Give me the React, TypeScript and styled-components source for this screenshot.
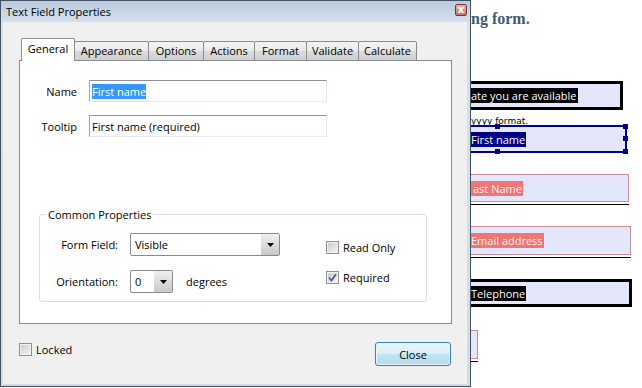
import styled, { createGlobalStyle } from "styled-components";

const Global = createGlobalStyle`
  html, body { margin: 0; padding: 0; background: #fff; }
  body { width: 642px; height: 388px; overflow: hidden; }
`;

const Screen = styled.div`
  display: flex;
  width: 642px;
  height: 388px;
  overflow: hidden;
  font-family: "Open Sans", "Liberation Sans", sans-serif;
  font-size: 11px;
  color: #000;
`;

/* ---------- dialog window ---------- */

const Dialog = styled.div`
  flex: none;
  width: 471px;
  height: 387px;
  box-sizing: border-box;
  border: 1px solid #44515e;
  background: linear-gradient(#b9cbdf, #d6e1ed 22px, #cfdcea);
  display: flex;
  flex-direction: column;
  padding: 0 3px 2px 2px;
  position: relative;
  z-index: 2;
`;

const TitleBar = styled.div`
  height: 21px;
  display: flex;
  align-items: center;
  justify-content: space-between;
  padding: 0 0 0 3px;
`;

const Title = styled.span`
  font-size: 11px;
  color: #000;
  margin-top: -1px;
`;

const CloseX = styled.div`
  width: 12px;
  height: 12px;
  box-sizing: border-box;
  border: 1px solid #6e3a3a;
  border-radius: 2px;
  background: linear-gradient(#e8b4b4, #c77373);
  color: #fff;
  font: bold 10px/10px "DejaVu Sans", sans-serif;
  text-align: center;
  margin-top: -3px;
`;

const Body = styled.div`
  flex: 1;
  background: #f0f0f0;
  display: flex;
  flex-direction: column;
  padding: 17px 0 0 0;
`;

const TabRow = styled.div`
  display: flex;
  align-items: flex-end;
  height: 22px;
  margin-left: 18px;
  margin-bottom: -1px;
  position: relative;
  z-index: 1;
`;

const Tab = styled.div<{ $active?: boolean; $w: number }>`
  box-sizing: border-box;
  width: ${(p) => p.$w}px;
  height: ${(p) => (p.$active ? 23 : 20)}px;
  padding-top: ${(p) => (p.$active ? 2 : 1)}px;
  margin-left: ${(p) => (p.$active ? 0 : -1)}px;
  border: 1px solid #898c95;
  border-bottom: ${(p) => (p.$active ? "none" : "1px solid #898c95")};
  border-radius: 2px 2px 0 0;
  background: ${(p) =>
    p.$active ? "#fff" : "linear-gradient(#f3f3f3, #ebebeb 50%, #dbdbdb 51%, #cfcfcf)"};
  position: relative;
  z-index: ${(p) => (p.$active ? 2 : 1)};
  font-size: 11px;
  line-height: 16px;
  text-align: center;
  white-space: nowrap;
`;

const Panel = styled.div`
  margin-left: 16px;
  width: 433px;
  height: 264px;
  box-sizing: border-box;
  border: 1px solid #898c95;
  background: #fff;
  padding-top: 19px;
  display: flex;
  flex-direction: column;
`;

const FieldRow = styled.div`
  display: grid;
  grid-template-columns: 57px 238px;
  column-gap: 12px;
  align-items: center;
  margin-bottom: 13px;
`;

const Label = styled.label`
  text-align: right;
  font-size: 11px;
`;

const TextBox = styled.div`
  box-sizing: border-box;
  height: 22px;
  border: 1px solid #e3e9ef;
  border-top-color: #8d9198;
  border-left-color: #a5a9b0;
  background: #fff;
  padding: 0 2px;
  display: flex;
  align-items: center;
  font-size: 11px;
`;

const Selected = styled.span`
  background: #3399ff;
  color: #fff;
  line-height: 15px;
`;

const Group = styled.fieldset`
  margin: 57px 0 0 19px;
  width: 388px;
  box-sizing: border-box;
  border: 1px solid #d5dfe5;
  border-radius: 3px;
  padding: 11px 0 8px 0;
  display: flex;
`;

const Legend = styled.legend`
  margin-left: 6px;
  padding: 0 2px;
  font-size: 11px;
  line-height: 15px;
`;

const PropGrid = styled.div`
  display: grid;
  grid-template-columns: 78px auto;
  column-gap: 12px;
  row-gap: 14px;
  align-items: center;
`;

const ControlLine = styled.div`
  display: flex;
  align-items: center;
  gap: 13px;
`;

const Combo = styled.div<{ $w: number }>`
  box-sizing: border-box;
  width: ${(p) => p.$w}px;
  height: 23px;
  border: 1px solid #8a8a8a;
  border-radius: 2px;
  background: #fff;
  display: flex;
  align-items: stretch;
  font-size: 11px;
`;

const ComboText = styled.span`
  flex: 1;
  display: flex;
  align-items: center;
  padding-left: 4px;
`;

const ComboArrow = styled.span`
  width: 18px;
  display: flex;
  align-items: center;
  justify-content: center;
  background: linear-gradient(#f0f0f0, #dcdcdc 50%, #c9c9c9);
  border-radius: 0 1px 1px 0;
`;

const CheckCol = styled.div`
  display: flex;
  flex-direction: column;
  gap: 17px;
  margin: 8px 0 0 46px;
`;

const CheckLine = styled.label`
  display: flex;
  align-items: center;
  gap: 4px;
  font-size: 11px;
  line-height: 13px;
`;

const Box = styled.span`
  width: 13px;
  height: 13px;
  box-sizing: border-box;
  border: 1px solid #8e8f8f;
  background: linear-gradient(135deg, #c9c9c9, #f6f6f6);
  box-shadow: inset 0 0 0 1px #f2f2f2;
  display: flex;
  align-items: center;
  justify-content: center;
`;

const Footer = styled.div`
  display: flex;
  align-items: flex-start;
  justify-content: space-between;
  margin: 18px 16px 0 16px;

  & > label {
    margin-top: 1px;
  }
`;

const Button = styled.div`
  width: 76px;
  height: 24px;
  box-sizing: border-box;
  border: 1px solid #3c7fb1;
  border-radius: 3px;
  background: linear-gradient(#eaf6fd, #d9eff9 50%, #c3e4f3 51%, #b2dbee);
  box-shadow: inset 0 0 0 1px #e8f5fb;
  display: flex;
  align-items: center;
  justify-content: center;
  font-size: 11px;
`;

/* ---------- page behind the dialog ---------- */

const Page = styled.div`
  flex: 1;
  background: #fff;
  overflow: hidden;
  display: flex;
  flex-direction: column;
`;

const Heading = styled.div`
  margin-top: 10px;
  font-family: "Liberation Serif", serif;
  font-weight: bold;
  font-size: 16px;
  line-height: 18px;
  color: #3d5b71;
  white-space: nowrap;
`;

const Note = styled.div<{ $top: number }>`
  margin-top: ${(p) => p.$top}px;
  font-family: "DejaVu Sans", sans-serif;
  font-size: 9px;
  line-height: 10px;
  white-space: nowrap;
`;

const Field = styled.div<{
  $top: number;
  $w: number;
  $h: number;
  $b: number;
  $border: string;
  $line?: boolean;
}>`
  position: relative;
  flex: none;
  margin-top: ${(p) => p.$top}px;
  margin-left: -20px;
  width: ${(p) => p.$w + 20}px;
  height: ${(p) => p.$h}px;
  box-sizing: border-box;
  border: ${(p) => p.$b}px solid ${(p) => p.$border};
  background: #e4e7fc;
  display: flex;
  align-items: center;
  padding-left: ${(p) => 20 - p.$b}px;
  box-shadow: ${(p) => (p.$line ? "0 2px 0 #fff, 0 3px 0 #000" : "none")};
`;

const FieldText = styled.span<{ $bg: string; $fg: string; $lead?: number }>`
  background: ${(p) => p.$bg};
  color: ${(p) => p.$fg};
  font-size: 11px;
  line-height: 15px;
  white-space: nowrap;
  padding: 0 1px 0 ${(p) => p.$lead ?? 0}px;
`;

const Handle = styled.span<{ $x: string; $y: string }>`
  position: absolute;
  width: 5px;
  height: 5px;
  background: #00008b;
  ${(p) => p.$x};
  ${(p) => p.$y};
`;

const Arrow = () => (
  <svg width="7" height="4" viewBox="0 0 7 4">
    <path d="M0 0 H7 L3.5 4 Z" fill="#000" />
  </svg>
);

const Check = () => (
  <svg width="9" height="9" viewBox="0 0 9 9">
    <path d="M1 4.5 L3.5 7.5 L8 1.2" stroke="#4b5f92" strokeWidth="1.8" fill="none" />
  </svg>
);

const tabs = [
  { name: "General", w: 54 },
  { name: "Appearance", w: 75 },
  { name: "Options", w: 56 },
  { name: "Actions", w: 52 },
  { name: "Format", w: 53 },
  { name: "Validate", w: 53 },
  { name: "Calculate", w: 59 },
];

export default function App() {
  return (
    <Screen>
      <Global />
      <Dialog>
        <TitleBar>
          <Title>Text Field Properties</Title>
          <CloseX>x</CloseX>
        </TitleBar>
        <Body>
          <TabRow>
            {tabs.map((t, i) => (
              <Tab key={t.name} $w={t.w} $active={i === 0}>
                {t.name}
              </Tab>
            ))}
          </TabRow>
          <Panel>
            <FieldRow>
              <Label>Name</Label>
              <TextBox>
                <Selected>First name</Selected>
              </TextBox>
            </FieldRow>
            <FieldRow>
              <Label>Tooltip</Label>
              <TextBox>First name (required)</TextBox>
            </FieldRow>
            <Group>
              <Legend>Common Properties</Legend>
              <PropGrid>
                <Label>Form Field:</Label>
                <Combo $w={150}>
                  <ComboText>Visible</ComboText>
                  <ComboArrow>
                    <Arrow />
                  </ComboArrow>
                </Combo>
                <Label>Orientation:</Label>
                <ControlLine>
                  <Combo $w={43}>
                    <ComboText>0</ComboText>
                    <ComboArrow>
                      <Arrow />
                    </ComboArrow>
                  </Combo>
                  <span>degrees</span>
                </ControlLine>
              </PropGrid>
              <CheckCol>
                <CheckLine>
                  <Box />
                  Read Only
                </CheckLine>
                <CheckLine>
                  <Box>
                    <Check />
                  </Box>
                  Required
                </CheckLine>
              </CheckCol>
            </Group>
          </Panel>
          <Footer>
            <CheckLine>
              <Box />
              Locked
            </CheckLine>
            <Button>Close</Button>
          </Footer>
        </Body>
      </Dialog>

      <Page>
        <Heading>ng form.</Heading>
        <Field $top={53} $w={152} $h={29} $b={3} $border="#000">
          <FieldText $bg="#000" $fg="#fff">
            ate you are available
          </FieldText>
        </Field>
        <Note $top={6}>yyyy format.</Note>
        <Field $top={-1} $w={156} $h={28} $b={2} $border="#00008b">
          <FieldText $bg="#00008b" $fg="#fff">
            First name
          </FieldText>
          <Handle $x="left: 42px" $y="top: -3px" />
          <Handle $x="left: 42px" $y="bottom: -3px" />
          <Handle $x="right: -3px" $y="top: -3px" />
          <Handle $x="right: -3px" $y="top: 9px" />
          <Handle $x="right: -3px" $y="bottom: -3px" />
        </Field>
        <Field $top={21} $w={158} $h={28} $b={1} $border="#c98d96" $line>
          <FieldText $bg="#f07575" $fg="#fff0f0" $lead={2}>
            ast Name
          </FieldText>
        </Field>
        <Field $top={24} $w={160} $h={29} $b={1} $border="#c98d96" $line>
          <FieldText $bg="#f07575" $fg="#fff0f0">
            Email address
          </FieldText>
        </Field>
        <Field $top={24} $w={161} $h={28} $b={3} $border="#000">
          <FieldText $bg="#000" $fg="#fff">
            Telephone
          </FieldText>
        </Field>
        <Field $top={23} $w={7} $h={29} $b={1} $border="#c98d96" $line />
      </Page>
    </Screen>
  );
}
